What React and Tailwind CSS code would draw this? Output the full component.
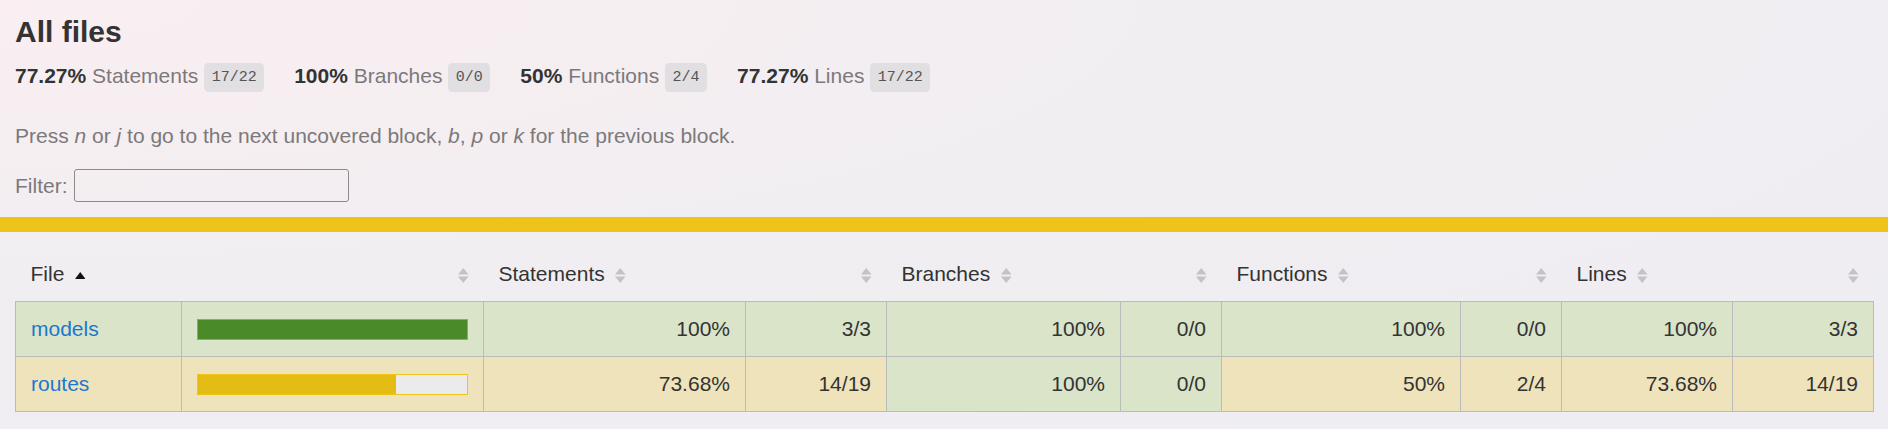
import React from "react";

const stats = [
  { pct: "77.27%", label: "Statements", frac: "17/22" },
  { pct: "100%", label: "Branches", frac: "0/0" },
  { pct: "50%", label: "Functions", frac: "2/4" },
  { pct: "77.27%", label: "Lines", frac: "17/22" },
];

const cols = [166, 302, 262, 141, 234, 101, 239, 101, 171, 141];

const rows = [
  {
    file: "models",
    pct: 100,
    level: "high",
    cells: [
      ["100%", "3/3", "high"],
      ["100%", "0/0", "high"],
      ["100%", "0/0", "high"],
      ["100%", "3/3", "high"],
    ],
  },
  {
    file: "routes",
    pct: 73.68,
    level: "medium",
    cells: [
      ["73.68%", "14/19", "medium"],
      ["100%", "0/0", "high"],
      ["50%", "2/4", "medium"],
      ["73.68%", "14/19", "medium"],
    ],
  },
];

const bg = {
  high: "bg-[#d9e4c8]",
  medium: "bg-[#efe3bc]",
};

function Sorter({ sorted }) {
  return (
    <svg viewBox="0 0 7 10" className="inline-block w-[10.5px] h-[15px] ml-[10.5px]">
      {sorted ? (
        <polygon points="0,7.3 3.5,2.7 7,7.3" fill="#111" />
      ) : (
        <>
          <polygon points="0,4.3 3.5,0 7,4.3" fill="#c4c2c6" />
          <polygon points="0,5.7 3.5,10 7,5.7" fill="#c4c2c6" />
        </>
      )}
    </svg>
  );
}

function Chart({ pct, level }) {
  const high = level === "high";
  return (
    <div className={`flex h-[21px] border ${high ? "border-[#86ad6a]" : "border-[#f0c419]"}`}>
      <div className={high ? "bg-[#4b8a29]" : "bg-[#e4bd14]"} style={{ width: `${pct}%` }} />
      <div className="flex-1 bg-[#ebebeb]" />
    </div>
  );
}

export default function App() {
  const td = "px-[15px] py-[15px] border-r border-[#bbbbbb] text-right";
  return (
    <div className="min-h-screen bg-[radial-gradient(ellipse_at_top_left,#faeef1_0%,#f1eef2_45%,#eeedf1_100%)] text-[#333] text-[21px] font-['Liberation_Sans',Arial,sans-serif]">
      <div className="p-[15px]">
        <h1 className="m-0 text-[30px] font-bold leading-[34px]">All files</h1>
        <div className="flex">
          {stats.map((s) => (
            <div key={s.label} className="py-[15px] pr-[30px] leading-[24px]">
              <span className="font-bold">{s.pct} </span>
              <span className="text-[#7c797b]">{s.label}</span>{" "}
              <span className="align-middle leading-[17px] rounded-[4.5px] bg-[#e2dfe2] px-[7.5px] py-[6px] text-[15px] text-[#555] font-['Liberation_Mono',monospace]">
                {s.frac}
              </span>
            </div>
          ))}
        </div>
        <p className="my-[21px] leading-[24px] text-[#7c797b]">
          Press <em>n</em> or <em>j</em> to go to the next uncovered block, <em>b</em>, <em>p</em> or{" "}
          <em>k</em> for the previous block.
        </p>
        <div className="flex items-center gap-[6px] text-[#7c797b]">
          Filter:
          <input type="search" className="w-[275px] h-[33px] border border-[#8d8a8d] rounded-[3px] bg-transparent" />
        </div>
      </div>
      <div className="h-[15px] bg-[#eec31a]" />
      <div className="p-[15px]">
        <table className="w-full table-fixed border-collapse leading-[24px]">
          <colgroup>
            {cols.map((w, i) => (
              <col key={i} style={{ width: w }} />
            ))}
          </colgroup>
          <thead>
            <tr className="border-b border-[#bbbbbb]">
              <th className="p-[15px] text-left font-normal whitespace-nowrap">
                File
                <Sorter sorted />
              </th>
              <th className="p-[15px] text-right font-normal">
                <Sorter />
              </th>
              {["Statements", "Branches", "Functions", "Lines"].map((h) => (
                <React.Fragment key={h}>
                  <th className="p-[15px] text-left font-normal whitespace-nowrap">
                    {h}
                    <Sorter />
                  </th>
                  <th className="p-[15px] text-right font-normal">
                    <Sorter />
                  </th>
                </React.Fragment>
              ))}
            </tr>
          </thead>
          <tbody className="border border-[#bbbbbb]">
            {rows.map((r) => (
              <tr key={r.file} className="border-b border-[#bbbbbb]">
                <td className={`p-[15px] border-r border-[#bbbbbb] whitespace-nowrap ${bg[r.level]}`}>
                  <a className="text-[#1b78d0]">{r.file}</a>
                </td>
                <td className={`p-[15px] border-r border-[#bbbbbb] ${bg[r.level]}`}>
                  <Chart pct={r.pct} level={r.level} />
                </td>
                {r.cells.map(([p, f, lv], i) => (
                  <React.Fragment key={i}>
                    <td className={`${td} ${bg[lv]}`}>{p}</td>
                    <td className={`${td} ${bg[lv]} ${i === 3 ? "border-r-0" : ""}`}>{f}</td>
                  </React.Fragment>
                ))}
              </tr>
            ))}
          </tbody>
        </table>
      </div>
    </div>
  );
}
